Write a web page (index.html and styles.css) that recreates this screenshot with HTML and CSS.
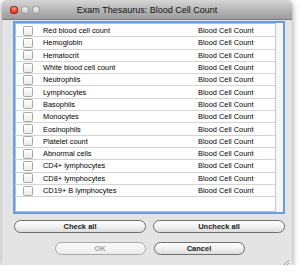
FILE: index.html
```html
<!DOCTYPE html>
<html lang="en">
<head>
    <meta charset="UTF-8">
    <title>Exam Thesaurus: Blood Cell Count</title>
    <link rel="stylesheet" href="styles.css">
</head>
<body>

<div class="window">
    <header class="titlebar">
        <div class="lights">
            <span class="light close"></span>
            <span class="light"></span>
            <span class="light"></span>
        </div>
        <div class="title">Exam Thesaurus: Blood Cell Count</div>
    </header>

    <div class="list-box">
        <div class="rows">
            <div class="row"><span class="check"></span><span class="name">Red blood cell count</span><span class="cat">Blood Cell Count</span></div>
            <div class="row"><span class="check"></span><span class="name">Hemoglobin</span><span class="cat">Blood Cell Count</span></div>
            <div class="row"><span class="check"></span><span class="name">Hematocrit</span><span class="cat">Blood Cell Count</span></div>
            <div class="row"><span class="check"></span><span class="name">White blood cell count</span><span class="cat">Blood Cell Count</span></div>
            <div class="row"><span class="check"></span><span class="name">Neutrophils</span><span class="cat">Blood Cell Count</span></div>
            <div class="row"><span class="check"></span><span class="name">Lymphocytes</span><span class="cat">Blood Cell Count</span></div>
            <div class="row"><span class="check"></span><span class="name">Basophils</span><span class="cat">Blood Cell Count</span></div>
            <div class="row"><span class="check"></span><span class="name">Monocytes</span><span class="cat">Blood Cell Count</span></div>
            <div class="row"><span class="check"></span><span class="name">Eosinophils</span><span class="cat">Blood Cell Count</span></div>
            <div class="row"><span class="check"></span><span class="name">Platelet count</span><span class="cat">Blood Cell Count</span></div>
            <div class="row"><span class="check"></span><span class="name">Abnormal cells</span><span class="cat">Blood Cell Count</span></div>
            <div class="row"><span class="check"></span><span class="name">CD4+ lymphocytes</span><span class="cat">Blood Cell Count</span></div>
            <div class="row"><span class="check"></span><span class="name">CD8+ lymphocytes</span><span class="cat">Blood Cell Count</span></div>
            <div class="row"><span class="check"></span><span class="name">CD19+ B lymphocytes</span><span class="cat">Blood Cell Count</span></div>
        </div>
        <div class="side-strip"></div>
    </div>

    <div class="buttons">
        <div class="btn-row wide">
            <button class="btn">Check all</button>
            <button class="btn">Uncheck all</button>
        </div>
        <div class="btn-row narrow">
            <button class="btn" disabled>OK</button>
            <button class="btn">Cancel</button>
        </div>
    </div>

    <div class="grip">
        <svg width="9" height="9" viewBox="0 0 9 9">
            <path d="M1 8 L8 1 M4 8 L8 4 M7 8 L8 7" stroke="#9a9a9a" stroke-width="1"/>
        </svg>
    </div>
</div>

</body>
</html>
```

FILE: styles.css
```css
/* Общие стили */
body {
    margin: 0;
    background: #ffffff;
    font-family: "Liberation Sans", Arial, sans-serif;
}

.window {
    position: relative;
    width: 290px;
    height: 265px;
    margin-left: 2px;
    background: #e4e4e4;
    border-radius: 5px 5px 0 0;
    box-shadow: 0 2px 6px rgba(0, 0, 0, 0.45);
    display: flex;
    flex-direction: column;
    overflow: hidden;
}

/* Заголовок окна */
.titlebar {
    position: relative;
    height: 19px;
    background: linear-gradient(#d6d6d6, #b4b4b4 55%, #9c9c9c);
    border-bottom: 1px solid #7e7e7e;
    display: flex;
    align-items: center;
    justify-content: center;
}

.lights {
    position: absolute;
    left: 8px;
    top: 6px;
    display: flex;
    gap: 3px;
}

.light {
    width: 8px;
    height: 8px;
    border-radius: 50%;
    background: radial-gradient(circle at 50% 35%, #f2f2f2, #c4c4c4 60%, #a0a0a0);
    box-shadow: inset 0 0 0 0.5px #8a8a8a;
}

.light.close {
    background: radial-gradient(circle at 50% 35%, #ff9c8e, #e8331e 55%, #a8140a);
    box-shadow: inset 0 0 0 0.5px #8b1a10;
}

.title {
    font-size: 9px;
    color: #111111;
    margin-top: 0;
}

/* Список */
.list-box {
    margin: 1px 0 0 11px;
    width: 268px;
    height: 189px;
    border: 2px solid #6a9ce0;
    background: #ffffff;
    display: flex;
    box-shadow: inset 0 0 0 1px #a9c3e6;
}

.rows {
    flex: 1;
    padding-top: 2px;
    border-right: 1px solid #c6c6c6;
}

.row {
    height: 11.3px;
    border-bottom: 1px solid #d4d4d4;
    display: flex;
    align-items: center;
    font-size: 7.4px;
    color: #000000;
}

.check {
    width: 8px;
    height: 8px;
    margin: 0 10px 0 8px;
    border: 0.5px solid #a6a6a6;
    border-radius: 1.5px;
    background: linear-gradient(#ffffff, #ebebeb);
    flex-shrink: 0;
}

.name {
    width: 155px;
}

.side-strip {
    width: 7px;
    background: #f7f7f7;
}

/* Кнопки */
.buttons {
    padding: 6px 7px 0 12px;
    display: flex;
    flex-direction: column;
    gap: 9px;
}

.btn-row {
    display: flex;
    justify-content: center;
}

.btn-row.wide {
    gap: 7px;
}

.btn-row.wide .btn {
    width: 132px;
}

.btn-row.narrow {
    gap: 8px;
}

.btn-row.narrow .btn {
    width: 91px;
}

.btn {
    height: 13px;
    padding: 0;
    border: 1px solid #6e6e6e;
    border-radius: 7px;
    background: linear-gradient(#ffffff, #f1f1f1 50%, #dcdcdc);
    font-family: "Liberation Sans", Arial, sans-serif;
    font-size: 7.5px;
    font-weight: bold;
    color: #1a1a1a;
    line-height: 11px;
}

.btn:disabled {
    border-color: #a8a8a8;
    color: #a6a6a6;
    background: linear-gradient(#fafafa, #ececec);
}

.grip {
    position: absolute;
    right: 2px;
    bottom: 2px;
    width: 9px;
    height: 9px;
}
```
